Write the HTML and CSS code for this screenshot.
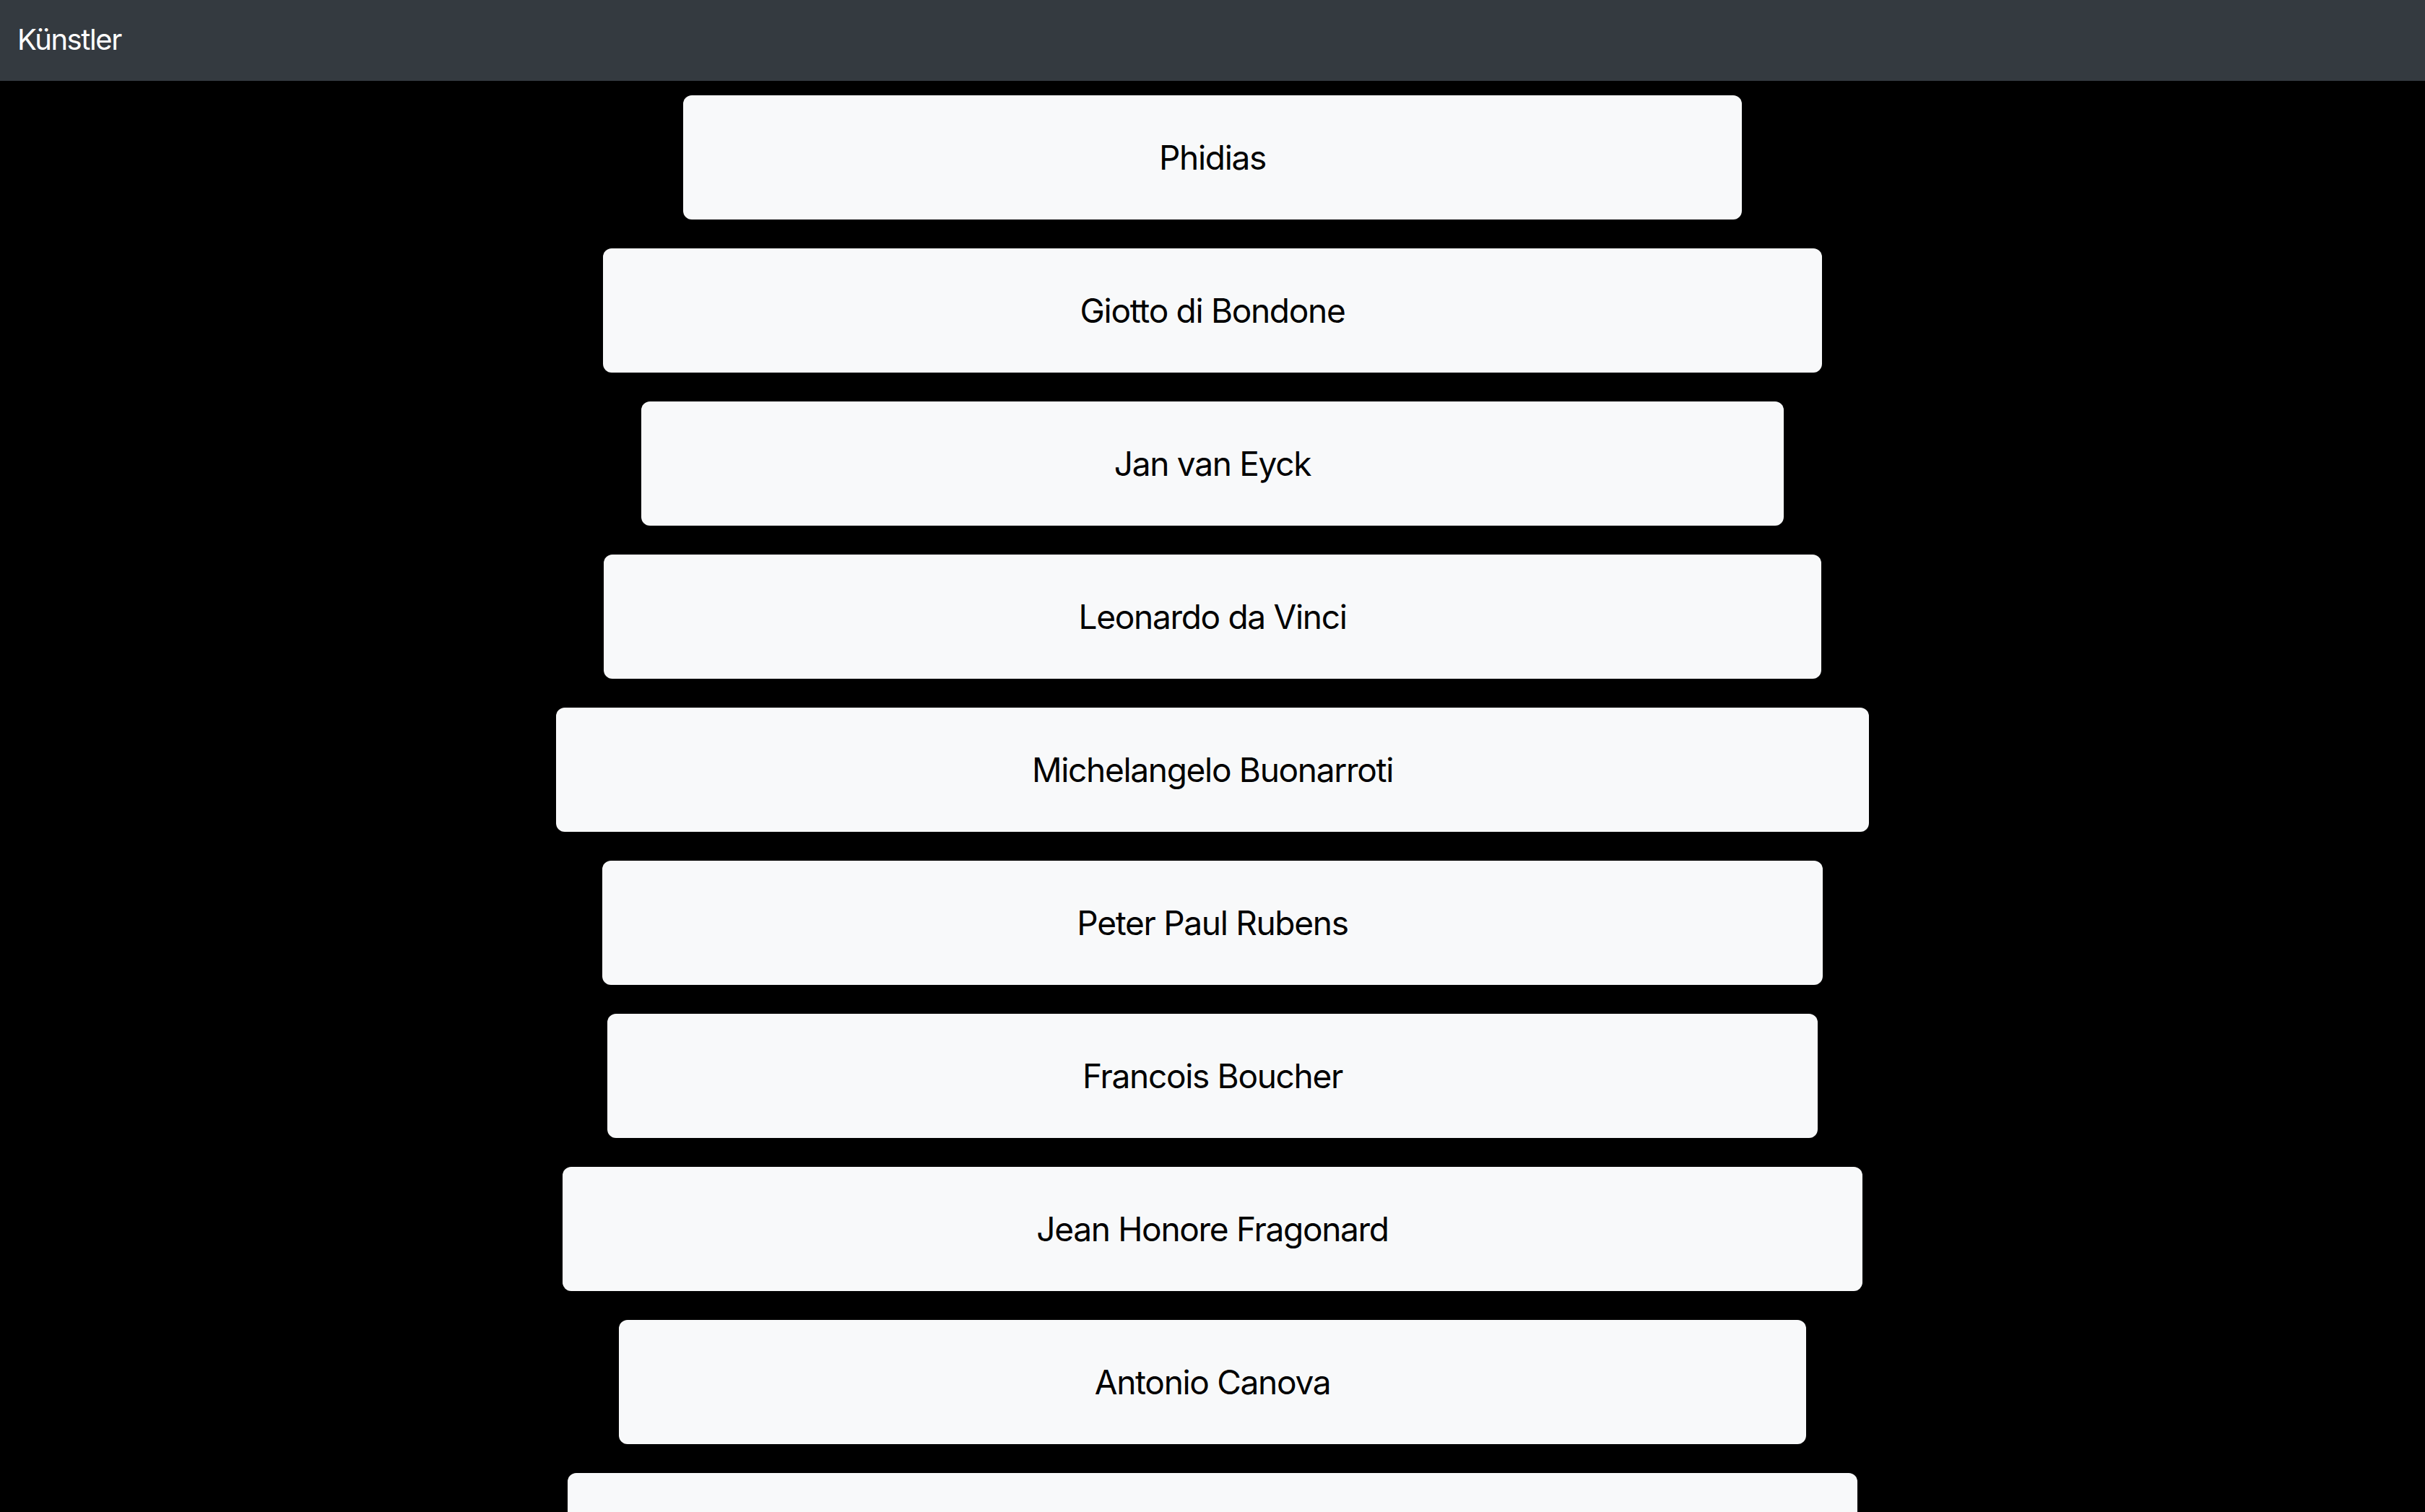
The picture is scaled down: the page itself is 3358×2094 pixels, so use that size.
FILE: index.html
```html
<!DOCTYPE html>
<html lang="de">
<head>
<meta charset="utf-8">
<title>Künstler</title>
<link rel="stylesheet" href="styles.css">
</head>
<body>
<nav class="navbar"><span class="brand">Künstler</span></nav>
<main class="list">
  <div class="card" style="width:1466px">Phidias</div>
  <div class="card" style="width:1688px">Giotto di Bondone</div>
  <div class="card" style="width:1582px">Jan van Eyck</div>
  <div class="card" style="width:1686px">Leonardo da Vinci</div>
  <div class="card" style="width:1818px">Michelangelo Buonarroti</div>
  <div class="card" style="width:1690px">Peter Paul Rubens</div>
  <div class="card" style="width:1676px">Francois Boucher</div>
  <div class="card" style="width:1800px">Jean Honore Fragonard</div>
  <div class="card" style="width:1644px">Antonio Canova</div>
  <div class="card" style="width:1786px"></div>
</main>
</body>
</html>
```
FILE: styles.css
```css
html, body {
  margin: 0;
  padding: 0;
  background: #000;
  font-family: Inter, "Noto Sans", "Liberation Sans", sans-serif;
}
body {
  height: 2094px;
  overflow: hidden;
}
.navbar {
  height: 112px;
  background: #343a40;
  display: flex;
  align-items: center;
  padding: 0 24px;
  box-sizing: border-box;
}
.brand {
  color: #fff;
  font-size: 40px;
  line-height: 60px;
  letter-spacing: -1.4px;
  margin-top: -2px;
}
.list {
  display: flex;
  flex-direction: column;
  align-items: center;
  gap: 40px;
  padding-top: 20px;
}
.card {
  flex: none;
  height: 172px;
  background: #f8f9fa;
  border-radius: 12px;
  display: flex;
  align-items: center;
  justify-content: center;
  color: #000;
  font-size: 46px;
  letter-spacing: -1.3px;
  box-sizing: border-box;
}
```
